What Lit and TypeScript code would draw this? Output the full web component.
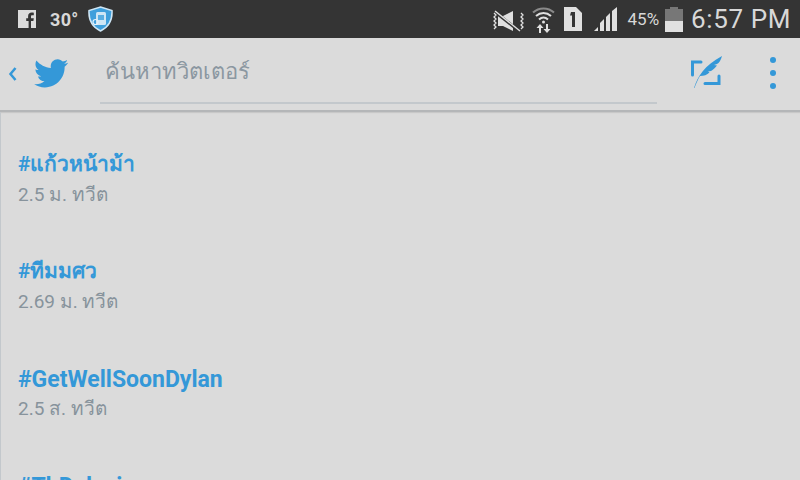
import { LitElement, html, css, svg } from 'lit';
import { customElement } from 'lit/decorators.js';

const TRENDS = [
  { tag: '#แก้วหน้าม้า', count: '2.5 ม. ทวีต', thai: true },
  { tag: '#ทีมมศว', count: '2.69 ม. ทวีต', thai: true },
  { tag: '#GetWellSoonDylan', count: '2.5 ส. ทวีต', thai: false },
  { tag: '#ThDalsai', count: '', thai: false },
];

const twitterBird = svg`<path fill="#3498d8" d="M36 5.200c-1.300.6-2.300.8-3.600.9 1.300-.8 2.400-2 2.800-3.500-1.200.7-2.600 1.300-4 1.500C30 2.900 28.300 2 26.500 2c-3.500 0-6.400 2.900-6.400 6.500 0 .5.100 1 .2 1.500C15 9.700 10.200 7.100 7 3.200c-.6 1-.9 2.100-.9 3.300 0 2.200 1.100 4.200 2.900 5.400-1 0-2-.3-2.900-.8v.1c0 3.100 2.200 5.800 5.200 6.400-.5.100-1.100.2-1.700.2-.4 0-.8 0-1.200-.1.8 2.600 3.200 4.500 6 4.500-2.200 1.700-5 2.800-8 2.800-.5 0-1 0-1.500-.1 2.800 1.800 6.200 2.900 9.800 2.900 11.800 0 18.200-9.800 18.200-18.200v-.8c1.200-.9 2.300-2 3.100-3.300z"/>`;

@customElement('app-root')
export class AppRoot extends LitElement {
  static styles = css`
    :host {
      display: flex;
      flex-direction: column;
      width: 800px;
      height: 480px;
      overflow: hidden;
      background: #dbdbdb;
      font-family: Roboto, 'Noto Sans', sans-serif;
    }
    .status {
      flex: none;
      height: 38px;
      display: flex;
      align-items: center;
      background: #343434;
      color: #d8d8d8;
      padding: 0 9px 0 18px;
    }
    .status svg { display: block; flex: none; }
    .temp {
      margin-left: 14px;
      font-size: 18px;
      font-weight: 700;
      letter-spacing: 0.3px;
    }
    .shield { margin-left: 9px; }
    .spacer { flex: 1; }
    .signal { margin-top: 3px; }
    .wifi { margin-left: 7px; }
    .sim { margin-left: 8px; }
    .bars { margin-left: 11px; }
    .battery-text { margin-left: 10px; font-size: 17px; }
    .battery { margin-left: 6px; }
    .clock { margin-left: 8px; font-size: 26px; letter-spacing: 0.6px; }
    .bar {
      flex: none;
      height: 74px;
      display: flex;
      align-items: center;
      border-bottom: 2px solid #b4b6b8;
      box-shadow: 0 1px 1px #c8c8c8;
      box-sizing: border-box;
      padding-left: 8px;
    }
    .bar svg { display: block; flex: none; }
    .bird { margin-left: 13px; }
    .search {
      width: 557px;
      height: 66px;
      margin-left: 32px;
      margin-bottom: 6px;
      box-sizing: border-box;
      padding: 16px 0 0 5px;
      border-bottom: 2px solid #c3c8cc;
      font-size: 22px;
      color: #8b97a1;
    }
    .compose { margin: 0 0 2px 33px; }
    .more { margin: 0 0 2px 47px; }
    .list {
      flex: 1;
      border-left: 1px solid #c3c8cc;
      padding: 37px 0 0 17px;
      display: flex;
      flex-direction: column;
      gap: 48px;
    }
    .tag {
      font-size: 23px;
      font-weight: 700;
      line-height: 34px;
      margin-bottom: -4px;
      color: #3498d8;
    }
    .tag.thai {
      font-size: 21px;
      line-height: 30px;
      margin-bottom: 0;
    }
    .count {
      font-size: 19px;
      line-height: 27px;
      margin-top: 2px;
      color: #87939c;
    }
  `;

  render() {
    return html`
      <div class="status">
        <svg width="18" height="18" viewBox="0 0 18 18">
          <path fill="#dcdcdc" d="M0 0h18v18h-5v-7h2.400l.4-2.800H13V6.500c0-.8.200-1.300 1.400-1.300h1.400V2.700c-.3 0-1.100-.1-2.100-.1-2.100 0-3.600 1.300-3.600 3.600v2H8.200V11h2.400v7H0z"/>
        </svg>
        <span class="temp">30°</span>
        <svg class="shield" width="25" height="26" viewBox="0 0 25 26">
          <path fill="#3f9fdc" stroke="#cfe6f5" stroke-width="1.500" d="M12.500 1 24 4.500c.5 9-2 16-11.500 20.500C3 20.500.5 13.500 1 4.500z"/>
          <rect x="8" y="6" width="10" height="13" rx="1.500" fill="#cfe6f5"/>
          <rect x="10" y="9" width="6" height="5" fill="#5aaee2"/>
          <circle cx="7.500" cy="16" r="2.500" fill="none" stroke="#e4f2fb" stroke-width="1.200"/>
        </svg>
        <div class="spacer"></div>
        <svg class="signal" width="32" height="22" viewBox="0 0 32 22">
          <path fill="#e0e0e0" d="M5 6h5l10 -5v20l-10-5H5z"/>
          <path stroke="#343434" stroke-width="3" d="M1 1l25 20"/>
          <path stroke="#e0e0e0" stroke-width="1.500" d="M2 1l25 20"/>
          <path fill="none" stroke="#e0e0e0" stroke-width="1.300" d="M1 3l2 2-2 2 2 2-2 2 2 2-2 2 2 2-2 2M28 3l2 2-2 2 2 2-2 2 2 2-2 2 2 2-2 2"/>
        </svg>
        <svg class="wifi" width="23" height="27" viewBox="0 0 23 27">
          <path fill="none" stroke="#8a8a8a" stroke-width="2" d="M1 6.500C7 1 16 1 22 6.500"/>
          <path fill="none" stroke="#e0e0e0" stroke-width="2" d="M4 10c4.500-4 10.500-4 15 0M7 13.500c2.700-2.400 6.300-2.400 9 0"/>
          <circle cx="11.500" cy="16" r="1.500" fill="#e0e0e0"/>
          <path fill="#e0e0e0" d="M7 27v-5H4.500L8 18l3.500 4H9v5zM14 18v5h-2.500L15 27l3.500-4H16v-5z"/>
        </svg>
        <svg class="sim" width="20" height="24" viewBox="0 0 20 24">
          <path fill="#e0e0e0" d="M1 0h12l6 6v18H1z"/>
          <path fill="#343434" d="M8 5h4v15H9V8.500H7z"/>
        </svg>
        <svg class="bars" width="24" height="24" viewBox="0 0 24 24">
          <path fill="#e0e0e0" d="M0 24 4 20v4zM6 24v-8l4-4v12zM12 24V10l4-4v18zM18 24V4l5-4v24z"/>
        </svg>
        <span class="battery-text">45%</span>
        <svg class="battery" width="18" height="25" viewBox="0 0 18 25">
          <path fill="#777" d="M5 0h8v2h5v12H0V2h5z"/>
          <path fill="#e0e0e0" d="M0 14h18v11H0z"/>
        </svg>
        <span class="clock">6:57 PM</span>
      </div>
      <div class="bar">
        <svg width="10" height="16" viewBox="0 0 10 16">
          <path fill="none" stroke="#3498d8" stroke-width="2.500" d="M7.500 2 2.500 8l5 6"/>
        </svg>
        <svg class="bird" width="37" height="32" viewBox="2 1 34 29">${twitterBird}</svg>
        <div class="search">ค้นหาทวิตเตอร์</div>
        <svg class="compose" width="32" height="34" viewBox="0 0 32 34">
          <path fill="none" stroke="#3498d8" stroke-width="3" stroke-linecap="round" d="M11 6H2.500v13M29 20v7.500H15"/>
          <path fill="#3498d8" d="M4 32C8 20 14 10 32 0c-1 4-3 7-5 8l-3 1 3 .5c-2 2.500-4 4.500-6 5.500l-3 .5 1.500 1c-2.500 2.500-5.500 3.500-9.500 3.500-2 3-4 8-5.500 12z"/>
        </svg>
        <svg class="more" width="8" height="34" viewBox="0 0 8 34">
          <circle cx="4" cy="4" r="3" fill="#3498d8"/>
          <circle cx="4" cy="17" r="3" fill="#3498d8"/>
          <circle cx="4" cy="30" r="3" fill="#3498d8"/>
        </svg>
      </div>
      <div class="list">
        ${TRENDS.map(
          (t) => html`
            <div class="item">
              <div class="tag ${t.thai ? 'thai' : ''}">${t.tag}</div>
              <div class="count">${t.count}</div>
            </div>
          `,
        )}
      </div>
    `;
  }
}
